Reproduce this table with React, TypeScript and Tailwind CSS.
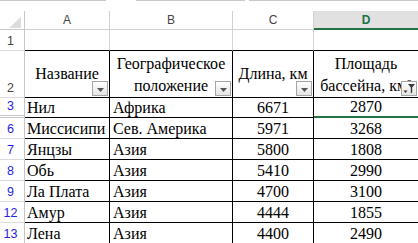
const ROWS = [
  { n: '3', name: 'Нил', loc: 'Африка', len: '6671', area: '2870', h: 'h-[20px]' },
  { n: '6', name: 'Миссисипи', loc: 'Сев. Америка', len: '5971', area: '3268', h: 'h-[21px]' },
  { n: '7', name: 'Янцзы', loc: 'Азия', len: '5800', area: '1808', h: 'h-[21px]' },
  { n: '8', name: 'Обь', loc: 'Азия', len: '5410', area: '2990', h: 'h-[21px]' },
  { n: '9', name: 'Ла Плата', loc: 'Азия', len: '4700', area: '3100', h: 'h-[21px]' },
  { n: '12', name: 'Амур', loc: 'Азия', len: '4444', area: '1855', h: 'h-[21px]' },
  { n: '13', name: 'Лена', loc: 'Азия', len: '4400', area: '2490', h: 'h-[21px]' },
]

function FilterButton({ active = false }: { active?: boolean }) {
  return (
    <div className="absolute right-[1px] bottom-[1px] w-[16px] h-[15px] border border-[#a6a6a6] bg-linear-to-b from-white to-[#e4e4e4] flex items-center justify-center">
      {active ? (
        <svg width="14" height="13" viewBox="0 0 14 13">
          <path d="M6 2h7l-2.8 3.6v5l-1.4 1v-6z" fill="#3a3a3a" />
          <path d="M1.5 8.5h4L3.5 11z" fill="#3a3a3a" />
        </svg>
      ) : (
        <svg width="7" height="4" viewBox="0 0 7 4" className="mt-[2px]">
          <path d="M0 0h7L3.5 4z" fill="#555" />
        </svg>
      )}
    </div>
  )
}

function RowHead({ n, h, blue, double }: { n: string; h: string; blue?: boolean; double?: boolean }) {
  return (
    <div
      className={`${h} w-[25px] shrink-0 border-r border-[#c6c6c6] ${
        double ? 'border-b-[3px] border-b-[#c6c6c6] border-double' : 'border-b border-b-[#dadada]'
      } flex items-end justify-center pr-[3px] pb-[1px] font-['Liberation_Sans',sans-serif] text-[12.5px] leading-[15px] ${
        blue ? 'text-[#1f1fe6]' : 'text-[#444]'
      }`}
    >
      {n}
    </div>
  )
}

export default function App() {
  return (
    <div className="w-[418px] h-[243px] overflow-hidden bg-white font-['Liberation_Serif',serif] text-black">
      {/* leftover edge of the formula bar */}
      <div className="h-[11px] flex">
        <div className="w-[106px] h-px bg-[#c8c8c8]" />
        <div className="w-[30px]" />
        <div className="w-[109px] h-px bg-[#c8c8c8]" />
        <div className="w-[4px]" />
        <div className="flex-1 h-px bg-[#c8c8c8]" />
      </div>

      {/* column letters */}
      <div className="flex h-[19px] font-['Liberation_Sans',sans-serif] text-[12px]">
        <div className="relative w-[25px] shrink-0 border-r border-b border-[#c8c8c8]">
          <svg width="12" height="11" viewBox="0 0 12 11" className="absolute right-[3px] bottom-[1px]">
            <path d="M12 0v11H0z" fill="#dcdcdc" />
          </svg>
        </div>
        <div className="w-[85px] shrink-0 border-r border-b border-[#d0d0d0] flex items-center justify-center text-[#444]">A</div>
        <div className="w-[123px] shrink-0 border-r border-b border-[#d0d0d0] flex items-center justify-center text-[#444]">B</div>
        <div className="w-[81px] shrink-0 border-r border-b border-[#d0d0d0] flex items-center justify-center text-[#444]">C</div>
        <div className="flex-1 bg-[#e1e1e1] border-b-2 border-[#217346] flex items-center justify-center text-[#217346] font-bold">D</div>
      </div>

      {/* row 1 */}
      <div className="flex h-[21px]">
        <RowHead n="1" h="h-[21px]" />
        <div className="w-[85px] shrink-0 border-r border-[#d4d4d4] border-b border-b-black" />
        <div className="w-[123px] shrink-0 border-r border-[#d4d4d4] border-b border-b-black" />
        <div className="w-[81px] shrink-0 border-r border-[#d4d4d4] border-b border-b-black" />
        <div className="flex-1 border-b border-black" />
      </div>

      {/* row 2: headers */}
      <div className="flex h-[47px] text-[16px] leading-[22px]">
        <RowHead n="2" h="h-[47px]" />
        <div className="relative w-[85px] shrink-0 border-r border-b border-black flex items-center justify-center">
          Название
          <FilterButton />
        </div>
        <div className="relative w-[123px] shrink-0 border-r border-b border-black flex flex-col items-center justify-center pt-[1px]">
          <span>Географическое</span>
          <span>положение</span>
          <FilterButton />
        </div>
        <div className="relative w-[81px] shrink-0 border-r border-b border-black flex items-center justify-center whitespace-nowrap">
          Длина, км
          <FilterButton />
        </div>
        <div className="relative flex-1 border-b border-black flex flex-col items-center justify-center pt-[1px] whitespace-nowrap overflow-hidden">
          <span>Площадь</span>
          <span>бассейна, км²</span>
          <FilterButton active />
        </div>
      </div>

      {/* data */}
      {ROWS.map((r, i) => (
        <div key={r.n} className={`flex ${r.h} text-[16px] leading-[18px]`}>
          <RowHead n={r.n} h={r.h} blue double={i === 0} />
          <div className="w-[85px] shrink-0 border-r border-b border-black flex items-end pl-[2px] whitespace-nowrap">{r.name}</div>
          <div className="w-[123px] shrink-0 border-r border-b border-black flex items-end pl-[3px] whitespace-nowrap">{r.loc}</div>
          <div className="w-[81px] shrink-0 border-r border-b border-black flex items-end justify-center">{r.len}</div>
          <div
            className={`flex-1 flex items-end justify-center ${
              i === 0 ? 'border-b-2 border-[#217346]' : 'border-b border-black'
            }`}
          >
            {r.area}
          </div>
        </div>
      ))}
    </div>
  )
}
